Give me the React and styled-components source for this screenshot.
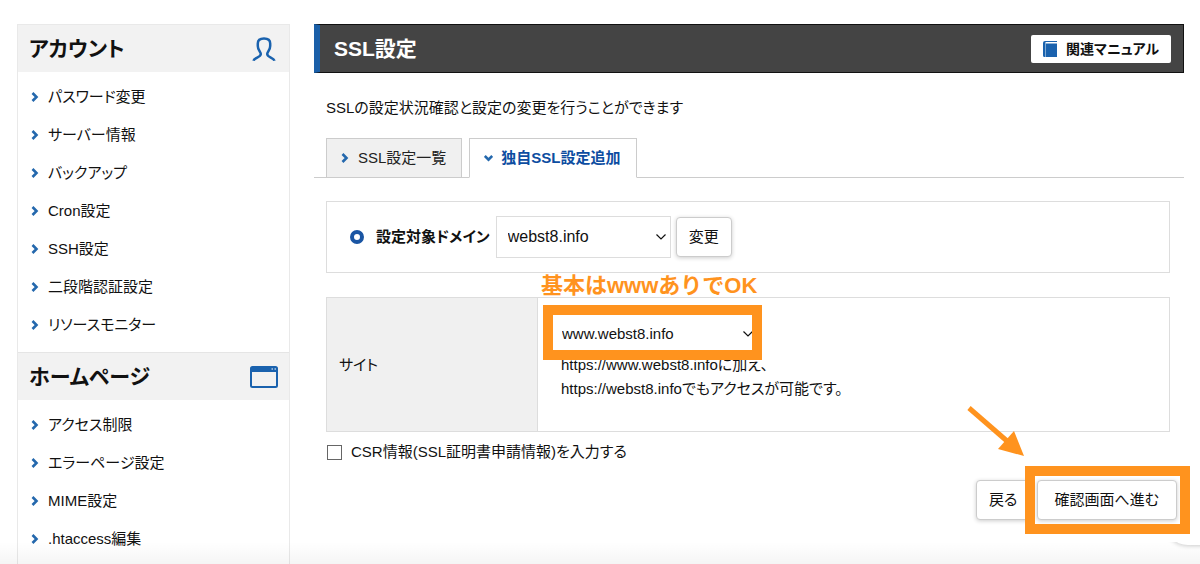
import React from "react";
import styled, { createGlobalStyle } from "styled-components";

const GlobalStyle = createGlobalStyle`
*{
  box-sizing:border-box;
}
body{
  margin:0;
  background:#fff;
  color:#111;
  font-family:"Liberation Sans", "Noto Sans CJK JP", sans-serif;
  font-size:15px;
  line-height:24px;
  font-feature-settings:"palt";
}
button, select, input{
  font:inherit;
  font-feature-settings:inherit;
  color:inherit;
}
`

const SPage = styled.div`
position:relative;
display:flex;
align-items:stretch;
gap:24px;
height:100vh;
padding:24px 16px 0 17px;
overflow:hidden;
`
const SSidebar = styled.aside`
flex:0 0 273px;
border:solid #e9e9e9;
border-width:1px 1px 0;
`
const SSideTitle = styled.h2`
display:flex;
align-items:center;
justify-content:space-between;
height:47px;
margin:0;
padding:0 11px;
background:#f2f2f2;
font-size:21px;
& svg{
  flex:none;
}
`
const SSideList = styled.ul`
margin:0;
padding:6px 0 8px;
list-style:none;
& + h2{
  border-top:solid 1px #e5e5e5;
  height:48px;
}
`
const SSideLink = styled.a`
display:flex;
align-items:center;
gap:8px;
height:38px;
padding-left:13px;
color:inherit;
text-decoration:none;
`
const SMain = styled.main`
flex:1;
min-width:0;
`
const SHeader = styled.header`
display:flex;
align-items:center;
justify-content:space-between;
height:49px;
padding:0 12px 0 14px;
border:solid 1px #111;
border-left:solid 6px #1a5fa8;
background:#444;
& h1{
  margin:0;
  color:#fff;
  font-size:21px;
}
`
const SManual = styled.a`
display:flex;
align-items:center;
gap:9px;
height:28px;
padding:0 12px;
border-radius:2px;
background:#fff;
color:#111;
font-size:14px;
font-weight:bold;
text-decoration:none;
`
const SLead = styled.p`
margin:23px 12px 18px;
`
const STabs = styled.nav`
display:flex;
gap:7px;
padding:0 12px;
border-bottom:solid 1px #ccc;
`
const STab = styled.a`
display:flex;
align-items:center;
gap:8px;
height:40px;
margin-bottom:-1px;
padding:0 15px 0 14px;
border:solid 1px #ccc;
border-bottom-color:${p => p.$active ? "#fff" : "#ccc"};
background:${p => p.$active ? "#fff" : "#f0f0f0"};
color:${p => p.$active ? "#0d4da1" : "#222"};
font-weight:${p => p.$active ? "bold" : "normal"};
text-decoration:none;
`
const SContent = styled.div`
padding:23px 14px 0 12px;
`
const SDomain = styled.div`
display:flex;
align-items:center;
height:72px;
padding-left:23px;
border:solid 1px #ddd;
& label{
  margin:0 6px 0 12px;
  font-weight:bold;
}
& button{
  margin-left:5px;
}
`
const SRing = styled.span`
width:14px;
height:14px;
border:solid 4px #1a55a3;
border-radius:50%;
`
const SSelectWrap = styled.span`
position:relative;
display:flex;
width:${p => p.$width};
& svg{
  position:absolute;
  top:50%;
  right:5px;
  margin-top:-5px;
  pointer-events:none;
}
`
const SSelect = styled.select`
appearance:none;
width:100%;
height:42px;
padding:0 24px 0 11px;
border:solid 1px #ddd;
border-radius:0;
background:#fff;
font-size:${p => p.$size};
`
const SButton = styled.button`
height:40px;
padding:0 ${p => p.$pad || "12px"};
border:solid 1px #ccc;
border-radius:4px;
background:#fff;
box-shadow:0 1px 4px rgba(0,0,0,.2);
white-space:nowrap;
`
const STable = styled.table`
width:100%;
height:135px;
margin-top:24px;
border-collapse:collapse;
& th, & td{
  border:solid 1px #ddd;
  text-align:left;
}
& th{
  width:211px;
  padding:0 12px;
  background:#f0f0f0;
  font-weight:normal;
}
& td{
  padding:15px 12px 28px;
  vertical-align:top;
}
& p{
  margin:-2px 0 0 11px;
}
`
const SMarked = styled.div`
position:relative;
width:fit-content;
`
const SMark = styled.span`
position:absolute;
z-index:1;
inset:${p => p.$inset};
border:solid 10px #ff931e;
pointer-events:none;
`
const SNote = styled.strong`
position:absolute;
z-index:1;
left:-9px;
bottom:55px;
color:#ff931e;
font-size:22px;
font-feature-settings:normal;
line-height:28px;
white-space:nowrap;
`
const SCheck = styled.label`
display:flex;
align-items:center;
gap:9px;
margin-top:8px;
padding-left:1px;
& input{
  appearance:none;
  width:15px;
  height:15px;
  margin:0;
  border:solid 1px #666;
  background:#fff;
}
& input:checked{
  background:#1a5fa8;
}
`
const SActions = styled.div`
display:flex;
justify-content:flex-end;
gap:6px;
margin:16px -7px 0 0;
`
const SArrow = styled.svg`
position:absolute;
right:152px;
bottom:62px;
`
const SFade = styled.div`
position:absolute;
left:0;
right:0;
bottom:0;
height:22px;
background:linear-gradient(rgba(0,0,0,0), rgba(0,0,0,.04));
pointer-events:none;
`
const SBubble = styled.div`
position:absolute;
right:-30px;
bottom:19px;
width:66px;
height:48px;
border-radius:24px;
background:#fff;
box-shadow:0 1px 4px rgba(0,0,0,.2);
clip-path:inset(45px 0 -6px 0);
`

const Chevron = ({ down }) => (
  <svg width="9" height="10" viewBox="0 0 9 10" fill="none" stroke="#2468ad" strokeWidth="2.6" aria-hidden="true">
    <path d={down ? "M.8 3l3.7 3.7L8.2 3" : "M1.500 1l4 4-4 4"} />
  </svg>
)

const PersonIcon = () => (
  <svg width="28" height="28" viewBox="0 0 28 28" fill="none" stroke="#1a62ae" strokeWidth="2.5" aria-hidden="true">
    <path d="M3.500 25.800C4.200 22.500 10.800 22.500 10.800 19C10.800 16.500 7.800 15.500 7.800 11V8.500C7.800 5 10.300 3.500 14 3.500C17.700 3.500 20.200 5 20.200 8.500V11C20.200 15.500 17.200 16.500 17.200 19C17.200 22.500 23.800 22.500 24.500 25.800" />
  </svg>
)

const WindowIcon = () => (
  <svg width="28" height="22" viewBox="0 0 28 22" aria-hidden="true">
    <rect x="1" y="1" width="26" height="20" rx="1.500" fill="#f2f2f2" stroke="#1a62ae" strokeWidth="2" />
    <path d="M1 1h26v5H1z" fill="#1a62ae" />
    <path d="M21.500 3h1.500M24.500 3h1.500" stroke="#fff" strokeWidth="1.200" />
  </svg>
)

const BookIcon = () => (
  <svg width="14" height="16" viewBox="0 0 14 16" aria-hidden="true">
    <path d="M2 0h12v1H2.500v1.500H14V16H1.500Q0 16 0 14.500V2Q0 0 2 0z" fill="#1a62ae" />
    <path d="M2.500 2v14" stroke="#9bbcdc" strokeWidth=".8" />
  </svg>
)

const Select = ({ id, label, value, width, size }) => (
  <SSelectWrap $width={width}>
    <SSelect id={id} aria-label={label} defaultValue={value} $size={size}>
      <option>{value}</option>
    </SSelect>
    <svg width="10" height="10" viewBox="0 0 10 10" fill="none" stroke="#111" strokeWidth="1.200" aria-hidden="true">
      <path d="M.5 2.500L5 7l4.500-4.500" />
    </svg>
  </SSelectWrap>
)

const menu = [
  {
    title: "アカウント",
    icon: <PersonIcon />,
    links: ["パスワード変更", "サーバー情報", "バックアップ", "Cron設定", "SSH設定", "二段階認証設定", "リソースモニター"],
  },
  {
    title: "ホームページ",
    icon: <WindowIcon />,
    links: ["アクセス制限", "エラーページ設定", "MIME設定", ".htaccess編集"],
  },
]

const App = () => {
  return (
  <SPage>
    <GlobalStyle />
    <SSidebar>
      {menu.map(({ title, icon, links }) => (
        <React.Fragment key={title}>
          <SSideTitle>{title}{icon}</SSideTitle>
          <SSideList>
            {links.map(text => (
              <li key={text}>
                <SSideLink href="#"><Chevron />{text}</SSideLink>
              </li>
            ))}
          </SSideList>
        </React.Fragment>
      ))}
    </SSidebar>

    <SMain>
      <SHeader>
        <h1>SSL設定</h1>
        <SManual href="#"><BookIcon />関連マニュアル</SManual>
      </SHeader>
      <SLead>SSLの設定状況確認と設定の変更を行うことができます</SLead>
      <STabs>
        <STab href="#"><Chevron />SSL設定一覧</STab>
        <STab href="#" $active><Chevron down />独自SSL設定追加</STab>
      </STabs>

      <SContent>
        <SDomain>
          <SRing />
          <label htmlFor="domain">設定対象ドメイン</label>
          <Select id="domain" value="webst8.info" width="175px" size="16px" />
          <SButton type="button">変更</SButton>
        </SDomain>

        <STable>
          <tbody>
            <tr>
              <th scope="row">サイト</th>
              <td>
                <SMarked>
                  <Select id="site" label="サイト" value="www.webst8.info" width="208px" size="15px" />
                  <SMark $inset="-8px -4px -5px -7px" />
                  <SNote>基本はwwwありでOK</SNote>
                </SMarked>
                <p>https://www.webst8.infoに加え、<br />https://webst8.infoでもアクセスが可能です。</p>
              </td>
            </tr>
          </tbody>
        </STable>

        <SCheck>
          <input type="checkbox" />
          CSR情報(SSL証明書申請情報)を入力する
        </SCheck>

        <SActions>
          <SButton type="button">戻る</SButton>
          <SMarked>
            <SButton type="submit" $pad="17px">確認画面へ進む</SButton>
            <SMark $inset="-14px -13px -14px -12px" />
            <SArrow width="58" height="52" viewBox="0 0 58 52" aria-hidden="true">
              <path d="M2 2L40 35" stroke="#ff931e" strokeWidth="5" />
              <path d="M57 50L31 43L47 25z" fill="#ff931e" />
            </SArrow>
          </SMarked>
        </SActions>
      </SContent>
    </SMain>
    <SFade />
    <SBubble />
  </SPage>
)};

export default App;
